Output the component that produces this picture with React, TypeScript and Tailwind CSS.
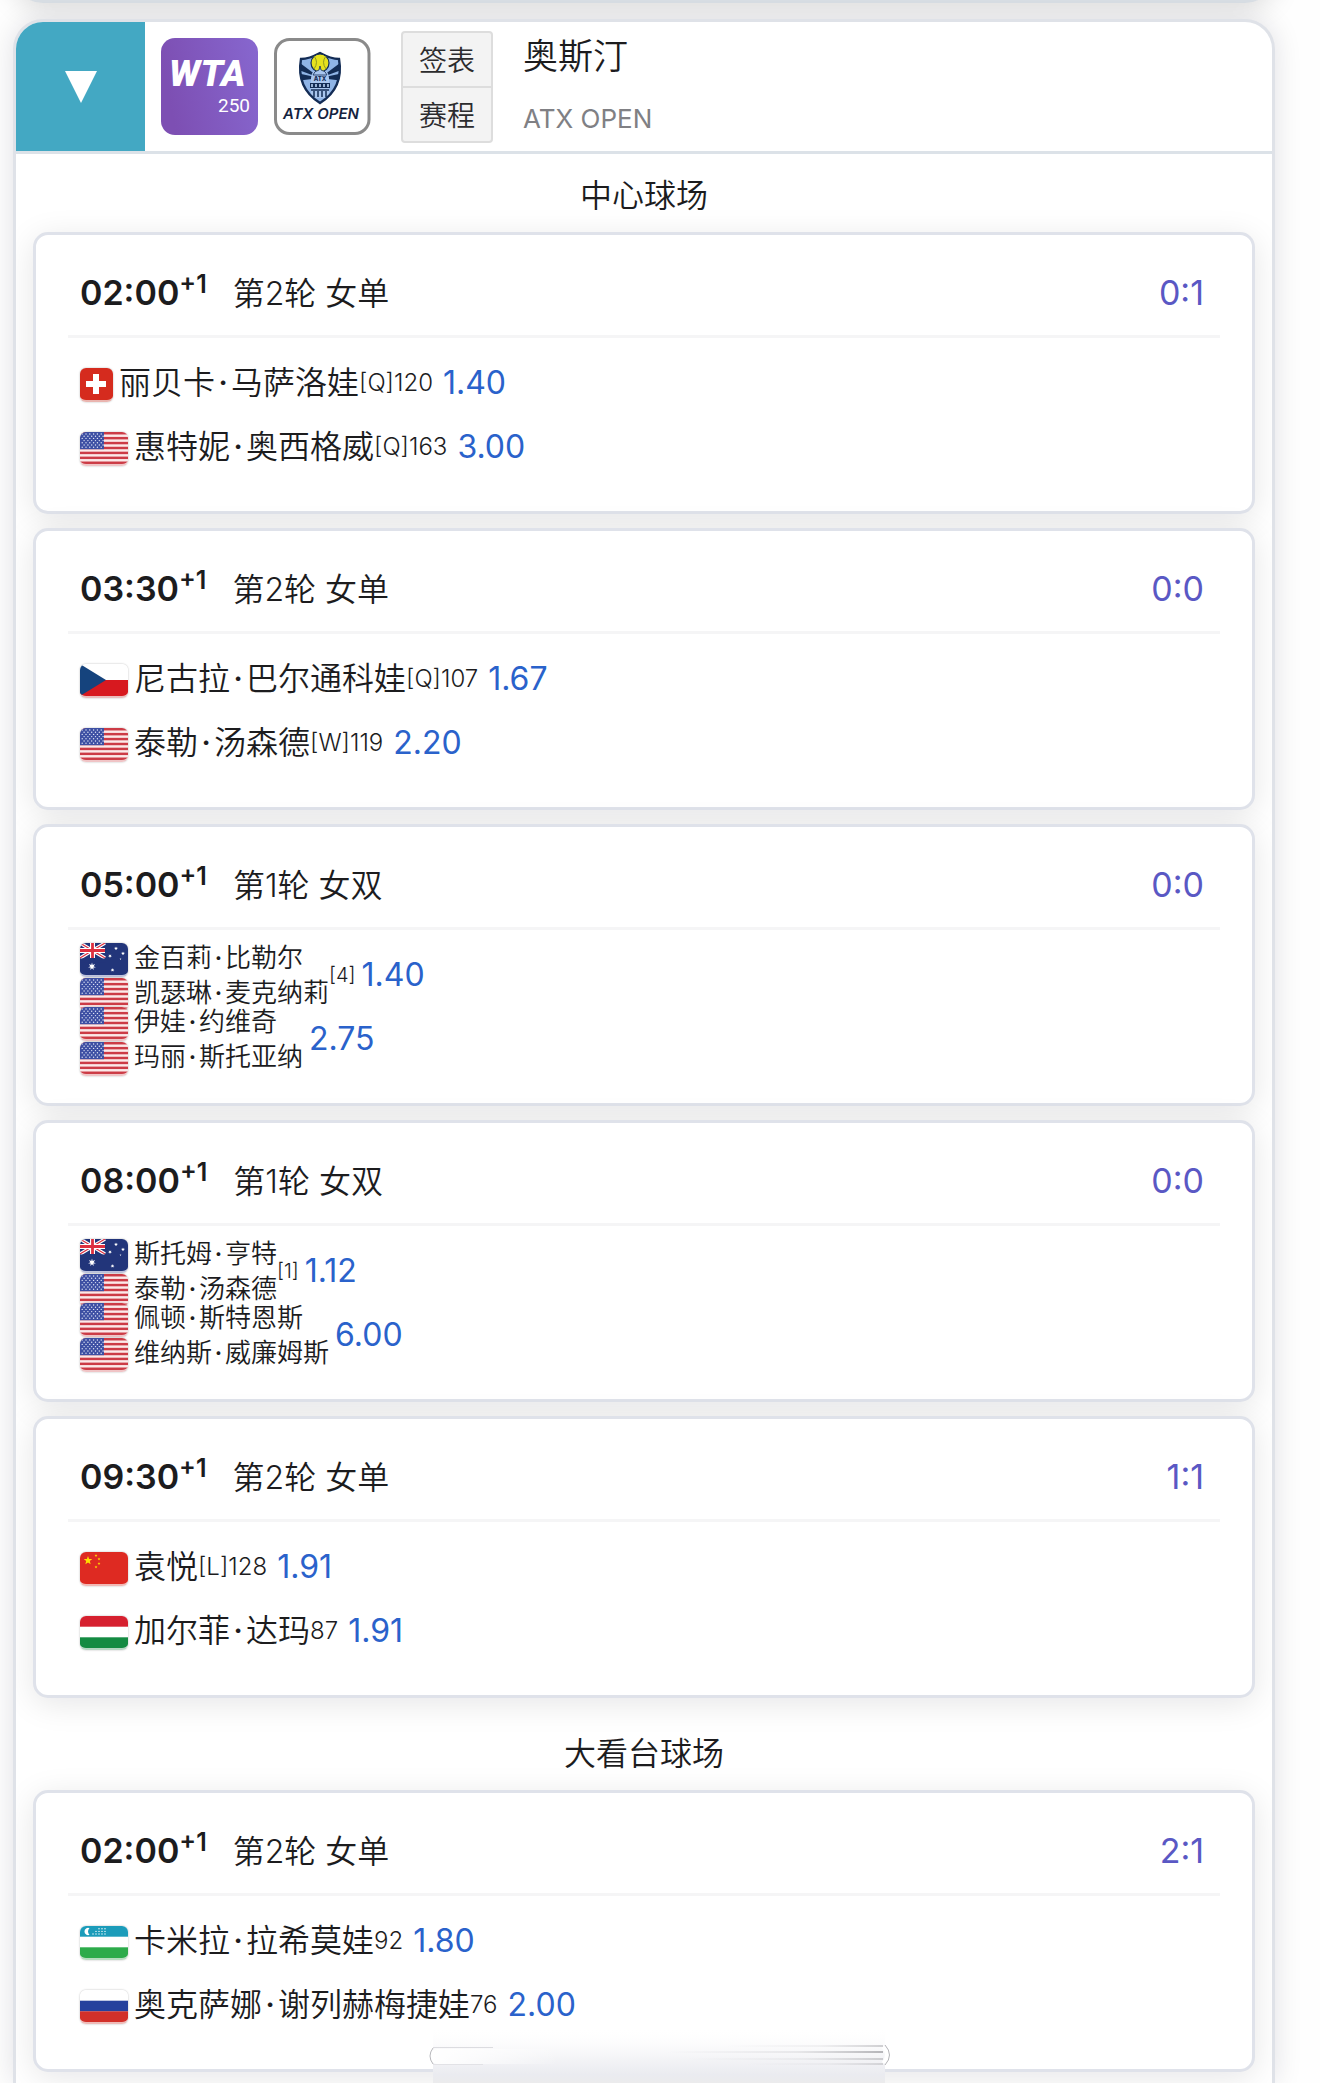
import { Fragment } from "react";

type Country = "ch" | "us" | "cz" | "au" | "cn" | "hu" | "uz" | "ru";
type Player = { name: string; country: Country };
type Side = { players: Player[]; tag?: string; odds: string };
type Match = { time: string; round: string; score: string; sides: Side[] };
type Court = { name: string; matches: Match[] };

const one = (name: string, country: Country, tag: string, odds: string): Side => ({
  players: [{ name, country }],
  tag,
  odds,
});

const two = (a: Player, b: Player, odds: string, tag?: string): Side => ({ players: [a, b], tag, odds });

const courts: Court[] = [
  {
    name: "中心球场",
    matches: [
      {
        time: "02:00",
        round: "第2轮 女单",
        score: "0:1",
        sides: [one("丽贝卡·马萨洛娃", "ch", "[Q]120", "1.40"), one("惠特妮·奥西格威", "us", "[Q]163", "3.00")],
      },
      {
        time: "03:30",
        round: "第2轮 女单",
        score: "0:0",
        sides: [one("尼古拉·巴尔通科娃", "cz", "[Q]107", "1.67"), one("泰勒·汤森德", "us", "[W]119", "2.20")],
      },
      {
        time: "05:00",
        round: "第1轮 女双",
        score: "0:0",
        sides: [
          two({ name: "金百莉·比勒尔", country: "au" }, { name: "凯瑟琳·麦克纳莉", country: "us" }, "1.40", "[4]"),
          two({ name: "伊娃·约维奇", country: "us" }, { name: "玛丽·斯托亚纳", country: "us" }, "2.75"),
        ],
      },
      {
        time: "08:00",
        round: "第1轮 女双",
        score: "0:0",
        sides: [
          two({ name: "斯托姆·亨特", country: "au" }, { name: "泰勒·汤森德", country: "us" }, "1.12", "[1]"),
          two({ name: "佩顿·斯特恩斯", country: "us" }, { name: "维纳斯·威廉姆斯", country: "us" }, "6.00"),
        ],
      },
      {
        time: "09:30",
        round: "第2轮 女单",
        score: "1:1",
        sides: [one("袁悦", "cn", "[L]128", "1.91"), one("加尔菲·达玛", "hu", "87", "1.91")],
      },
    ],
  },
  {
    name: "大看台球场",
    matches: [
      {
        time: "02:00",
        round: "第2轮 女单",
        score: "2:1",
        sides: [one("卡米拉·拉希莫娃", "uz", "92", "1.80"), one("奥克萨娜·谢列赫梅捷娃", "ru", "76", "2.00")],
      },
    ],
  },
];

function star(cx: number, cy: number, r: number, points = 5) {
  return Array.from({ length: points * 2 }, (_, i) => {
    const a = (Math.PI * i) / points - Math.PI / 2;
    const d = i % 2 ? r * 0.42 : r;
    return `${(cx + d * Math.cos(a)).toFixed(2)},${(cy + d * Math.sin(a)).toFixed(2)}`;
  }).join(" ");
}

function FlagArt({ country }: { country: Country }) {
  switch (country) {
    case "ch":
      return (
        <>
          <rect width="33" height="32" fill="#d52b1e" />
          <path d="M13 6h6v7h7v6h-7v7h-6v-7H6v-6h7z" fill="#fff" />
        </>
      );
    case "us":
      return (
        <>
          <rect width="48" height="32" fill="#fbe9e9" />
          {[0, 1, 2, 3, 4, 5, 6].map((i) => (
            <rect key={i} y={i * 4.92} width="48" height="2.46" fill="#cc3b46" />
          ))}
          <rect width="24" height="17.2" fill="#3d4fa3" />
          {[0, 1, 2, 3, 4, 5, 6].map((r) =>
            [0, 1, 2, 3, 4, 5].map((c) => (
              <circle key={`${r}-${c}`} cx={2.2 + c * 3.8 + (r % 2) * 1.9} cy={2 + r * 2.2} r="0.7" fill="#dfe4f5" />
            )),
          )}
        </>
      );
    case "cz":
      return (
        <>
          <rect width="48" height="32" fill="#fff" />
          <rect y="16" width="48" height="16" fill="#d7191f" />
          <path d="M0 0l26 16L0 32z" fill="#15437d" />
        </>
      );
    case "au":
      return (
        <>
          <rect width="48" height="32" fill="#22357a" />
          <path d="M0 0l25 15M25 0L0 15" stroke="#fff" strokeWidth="3.4" />
          <path d="M0 0l25 15M25 0L0 15" stroke="#dd2f40" strokeWidth="1.2" />
          <path d="M12.5 0v15M0 7.5h25" stroke="#fff" strokeWidth="5" />
          <path d="M12.5 0v15M0 7.5h25" stroke="#dd2f40" strokeWidth="2.8" />
          <rect y="15.5" width="26" height="4" fill="#22357a" />
          <polygon points={star(12, 23.5, 4, 7)} fill="#fff" />
          <polygon points={star(36, 5.5, 2, 7)} fill="#fff" />
          <polygon points={star(30, 13, 2, 7)} fill="#fff" />
          <polygon points={star(43, 10.5, 2, 7)} fill="#fff" />
          <polygon points={star(40.5, 16, 1)} fill="#fff" />
          <polygon points={star(32.5, 27, 2, 7)} fill="#fff" />
        </>
      );
    case "cn":
      return (
        <>
          <rect width="48" height="32" fill="#de2a22" />
          <polygon points={star(8, 8.5, 4.5)} fill="#ffde00" />
          <polygon points={star(16, 3.5, 1.5)} fill="#ffde00" />
          <polygon points={star(19, 7, 1.5)} fill="#ffde00" />
          <polygon points={star(19, 11.5, 1.5)} fill="#ffde00" />
          <polygon points={star(16, 15, 1.5)} fill="#ffde00" />
        </>
      );
    case "hu":
      return (
        <>
          <rect width="48" height="32" fill="#fff" />
          <rect width="48" height="10.7" fill="#d6202f" />
          <rect y="21.3" width="48" height="10.7" fill="#148b42" />
        </>
      );
    case "uz":
      return (
        <>
          <rect width="48" height="32" fill="#fff" />
          <rect width="48" height="10.7" fill="#1c9cba" />
          <rect y="21.3" width="48" height="10.7" fill="#2cab4a" />
          <path d="M9.5 2.2a3.6 3.6 0 1 0 0 6.6a4.4 4.4 0 0 1 0-6.6z" fill="#fff" />
          {[13, 16, 19, 22, 25].map((x) => (
            <circle key={x} cx={x} cy="8" r="0.7" fill="#fff" />
          ))}
          {[16, 19, 22, 25].map((x) => (
            <circle key={x} cx={x} cy="5.4" r="0.7" fill="#fff" />
          ))}
          {[19, 22, 25].map((x) => (
            <circle key={x} cx={x} cy="2.8" r="0.7" fill="#fff" />
          ))}
        </>
      );
    case "ru":
      return (
        <>
          <rect width="48" height="32" fill="#fff" />
          <rect y="10.7" width="48" height="10.7" fill="#26419d" />
          <rect y="21.3" width="48" height="10.7" fill="#d2302a" />
        </>
      );
  }
}

const flagEdge: Record<Country, string> = {
  ch: "border-[#eab5b0]",
  us: "border-[#f0c4c6]",
  cz: "border-[#e8bcbc]",
  au: "border-[#bcc2dc]",
  cn: "border-[#f2b9b5]",
  hu: "border-[#b5d6c2]",
  uz: "border-[#b5dcbe]",
  ru: "border-[#eebbb8]",
};

function Flag({ country }: { country: Country }) {
  const width = country === "ch" ? 33 : 48;
  return (
    <span
      className={`mt-1 mr-1.5 block shrink-0 overflow-hidden rounded-md border-b-2 shadow-[0_0_2px_rgba(0,0,0,0.3)] ${flagEdge[country]}`}
    >
      <svg width={width} height="32" viewBox={`0 0 ${width} 32`} className="block" role="img" aria-label={country}>
        <FlagArt country={country} />
      </svg>
    </span>
  );
}

function PlayerName({ name }: { name: string }) {
  return (
    <span className="whitespace-nowrap">
      {name.split("·").map((part, i) => (
        <Fragment key={i}>
          {i > 0 && <span className="inline-block w-[0.5em] text-center font-medium">·</span>}
          {part}
        </Fragment>
      ))}
    </span>
  );
}

function SideRow({ side }: { side: Side }) {
  const doubles = side.players.length > 1;
  return (
    <li className="flex h-16 items-center">
      <div className="flex flex-col">
        {side.players.map((p) => (
          <div
            key={p.name}
            className={doubles ? "flex h-[35px] items-center text-[26px]" : "flex h-[35px] items-center text-[32px]"}
          >
            <Flag country={p.country} />
            <PlayerName name={p.name} />
          </div>
        ))}
      </div>
      {side.tag && <span className={doubles ? "text-[20px]" : "text-[24px]"}>{side.tag}</span>}
      <span
        className={
          doubles ? "ml-1.5 text-[32px] font-normal text-[#2a62cb]" : "ml-2.5 text-[32px] font-normal text-[#2a62cb]"
        }
      >
        {side.odds}
      </span>
    </li>
  );
}

function MatchCard({ match }: { match: Match }) {
  return (
    <article className="rounded-[15px] border-3 border-[#dfe2ea] bg-white px-8 pb-8 shadow-[0_6px_32px_rgba(0,0,20,0.1)]">
      <header className="flex h-[103px] items-center justify-between border-b-3 border-[#f5f5f6] pt-4 pr-4 pl-3 text-[34px] leading-[50px]">
        <div className="flex items-center">
          <time className="flex items-start font-semibold">
            {match.time}
            <sup className="top-0 text-[25px] leading-[32px]">+1</sup>
          </time>
          <span className="ml-[26px] pt-0.5 text-[32px]">{match.round}</span>
        </div>
        <span className="text-[34px] font-normal text-[#5a58c4]">{match.score}</span>
      </header>
      <ul className="px-3 pt-[13px]">
        {match.sides.map((s) => (
          <SideRow key={s.players[0].name} side={s} />
        ))}
      </ul>
    </article>
  );
}

function WtaLogo() {
  return (
    <svg width="97" height="97" viewBox="0 0 97 97" role="img" aria-label="WTA 250" className="shrink-0">
      <defs>
        <linearGradient id="wta" x1="0" y1="0.2" x2="1" y2="0">
          <stop offset="0" stopColor="#7d4fb3" />
          <stop offset="1" stopColor="#8767cf" />
        </linearGradient>
      </defs>
      <rect width="97" height="97" rx="14" fill="url(#wta)" />
      <text x="8" y="48" fill="#fff" fontFamily="Roboto" fontWeight="900" fontStyle="italic" fontSize="37">
        WTA
      </text>
      <text x="89" y="74" fill="#fff" textAnchor="end" fontFamily="Roboto" fontWeight="400" fontSize="19">
        250
      </text>
    </svg>
  );
}

function AtxLogo() {
  return (
    <svg width="97" height="97" viewBox="0 0 97 97" role="img" aria-label="ATX OPEN" className="shrink-0">
      <defs>
        <clipPath id="crest">
          <path d="M27 21Q35 21 46 15Q57 21 65 21Q70 50 46 65Q22 50 27 21Z" />
        </clipPath>
      </defs>
      <rect x="1.5" y="1.5" width="93.5" height="94" rx="14" fill="#fff" stroke="#8a8a8a" strokeWidth="3" />
      <g clipPath="url(#crest)">
        <rect x="20" y="10" width="52" height="60" fill="#8fb4e6" />
        <path d="M46 40L22 22v9zM46 40L22 35v8zM46 40L70 22v9zM46 40L70 35v8z" fill="#132c55" />
        <path d="M37 40Q37 32 46 31Q55 32 55 40V60H37z" fill="#a9c6ee" />
        <path d="M36 45h20v5H36z" fill="#132c55" />
        <path d="M38 46v3M42 46v3M46 46v3M50 46v3M54 46v3" stroke="#b9d2f3" strokeWidth="1.6" />
        <path d="M37 52h18M40 53v6M44 53v6M48 53v6M52 53v6" stroke="#132c55" strokeWidth="1.5" />
      </g>
      <path d="M27 21Q35 21 46 15Q57 21 65 21Q70 50 46 65Q22 50 27 21Z" fill="none" stroke="#132c55" strokeWidth="2.4" />
      <circle cx="46" cy="25" r="9" fill="#e6e21d" stroke="#132c55" strokeWidth="1.2" />
      <path d="M40 18q5 6 0 13M52 18q-5 6 0 13" fill="none" stroke="#8f9a20" strokeWidth="1" />
      <path d="M46 28l1 4q5 1 6 5h-14q1-4 6-5z" fill="#a9c6ee" stroke="#132c55" strokeWidth="0.8" />
      <text x="46" y="42.5" textAnchor="middle" fontFamily="Inter" fontWeight="800" fontSize="6" fill="#132c55">
        ATX
      </text>
      <text x="47" y="81" textAnchor="middle" fontFamily="Inter" fontWeight="600" fontStyle="italic" fontSize="15" fill="#15233f">
        ATX OPEN
      </text>
    </svg>
  );
}

function GlassBar() {
  return (
    <svg
      className="pointer-events-none absolute bottom-0 left-1/2 -translate-x-1/2"
      width="466"
      height="56"
      viewBox="0 0 466 56"
      aria-hidden="true"
    >
      <defs>
        <linearGradient id="haze" x1="0" y1="0" x2="0" y2="1">
          <stop offset="0" stopColor="#fff" stopOpacity="0" />
          <stop offset="0.5" stopColor="#f6f6f8" />
          <stop offset="0.85" stopColor="#eaebf0" />
          <stop offset="1" stopColor="#ebebec" />
        </linearGradient>
        <linearGradient id="fadeRight">
          <stop offset="0" stopColor="#fff" />
          <stop offset="1" stopColor="#fff" stopOpacity="0" />
        </linearGradient>
        <linearGradient id="fadeLeft">
          <stop offset="0" stopColor="#b4b4b8" stopOpacity="0" />
          <stop offset="0.6" stopColor="#b4b4b8" stopOpacity="0.3" />
          <stop offset="1" stopColor="#a4a4a8" />
        </linearGradient>
      </defs>
      <rect x="6" width="452" height="56" fill="url(#haze)" />
      <rect x="3" y="22" width="130" height="15" rx="7" fill="url(#fadeRight)" />
      <path d="M6 21q-6 8 0 16" fill="none" stroke="#b8b8bc" />
      <rect x="6" y="20" width="60" height="1" fill="#dcdce0" />
      <rect x="6" y="37" width="50" height="1" fill="#e2e2e6" />
      <rect x="300" y="18" width="156" height="2" fill="url(#fadeLeft)" opacity="0.5" />
      <rect x="240" y="24" width="216" height="2" fill="url(#fadeLeft)" opacity="0.8" />
      <rect x="260" y="31" width="196" height="2" fill="url(#fadeLeft)" opacity="0.5" />
      <rect x="320" y="36" width="136" height="2" fill="url(#fadeLeft)" opacity="0.4" />
      <path d="M456 20q7 8 0 16" fill="none" stroke="#fff" strokeWidth="3" />
      <path d="M458 18q9 10 0 20" fill="none" stroke="#b4b4b8" />
    </svg>
  );
}

export default function App() {
  return (
    <main className="relative flex min-h-screen flex-col overflow-hidden bg-[#fefefe] pr-[45px] pl-[13px] font-['Inter','Noto_Sans_CJK_SC',sans-serif] font-[350] text-[#1c1c1e]">
      <div className="-mt-24 h-[99px] shrink-0 rounded-[30px] border-3 border-[#d9dfe5] bg-white shadow-[0_4px_28px_rgba(0,0,0,0.15)]" />
      <section className="relative mt-4 flex-1 overflow-clip rounded-t-[30px] border-x-3 border-t-3 border-[#dfe2e8] bg-white shadow-[0_0_28px_rgba(0,0,40,0.12)]">
        <header className="flex h-[132px] items-stretch border-b-3 border-[#dce2e8]">
          <button type="button" aria-label="收起" className="flex w-[129px] shrink-0 items-center justify-center bg-[#43a8c3]">
            <svg width="32" height="32" viewBox="0 0 32 32">
              <path d="M0 0h32L16 32z" fill="#fff" />
            </svg>
          </button>
          <div className="ml-4 flex items-center gap-4">
            <WtaLogo />
            <AtxLogo />
          </div>
          <div className="ml-[30px] flex flex-col justify-center text-[28px] text-[#2c2c2e]">
            <button type="button" className="h-[57px] w-[92px] rounded-t-sm border-2 border-[#dddddd] bg-[#f3f3f3] pt-1">
              签表
            </button>
            <button type="button" className="-mt-0.5 h-[57px] w-[92px] rounded-b-sm border-2 border-[#dddddd] bg-[#f3f3f3] pt-1">
              赛程
            </button>
          </div>
          <div className="ml-[30px] flex flex-col justify-center">
            <h1 className="text-[35px] leading-[64px]">奥斯汀</h1>
            <p className="text-[26px] leading-[62px] font-normal text-[#808084]">ATX OPEN</p>
          </div>
        </header>
        <div className="flex flex-col gap-5 px-[17px] pt-1.5 pb-[11px]">
          {courts.map((court) => (
            <section key={court.name}>
              <h2 className="text-center text-[32px] leading-[72px]">{court.name}</h2>
              <div className="flex flex-col gap-3.5">
                {court.matches.map((m) => (
                  <MatchCard key={m.time} match={m} />
                ))}
              </div>
            </section>
          ))}
        </div>
      </section>
      <GlassBar />
    </main>
  );
}
